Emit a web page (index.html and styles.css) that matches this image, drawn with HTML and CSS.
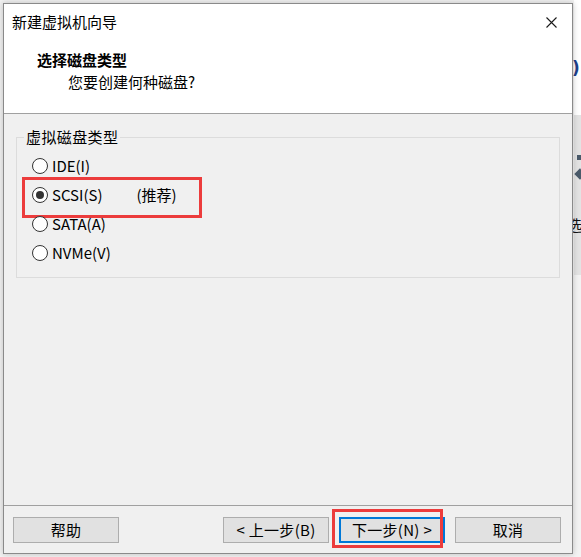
FILE: index.html
```html
<!DOCTYPE html>
<html lang="zh-CN">
<head>
<meta charset="utf-8">
<title>新建虚拟机向导</title>
<link rel="stylesheet" href="styles.css">
</head>
<body>
<div class="desktop">
  <div class="backapp">
    <div class="backapp-top"><span class="paren">)</span></div>
    <div class="backapp-band">
      <span class="mark-square"></span>
      <span class="mark-diamond"></span>
      <span class="back-text">选</span>
    </div>
  </div>

  <div class="window">
    <div class="titlebar">
      <span class="title">新建虚拟机向导</span>
      <svg class="close" width="11" height="11" viewBox="0 0 11 11"><path d="M0.5 0.5 L10.5 10.5 M10.5 0.5 L0.5 10.5" stroke="#1a1a1a" stroke-width="1.1" fill="none"/></svg>
    </div>
    <div class="header">
      <div class="heading">选择磁盘类型</div>
      <div class="subheading">您要创建何种磁盘?</div>
    </div>
    <div class="body">
      <fieldset class="group">
        <legend class="legend">虚拟磁盘类型</legend>
        <div class="row"><span class="radio"></span><span class="label">IDE(I)</span></div>
        <div class="row row-marked"><span class="radio checked"></span><span class="label">SCSI(S)</span><span class="label rec">(推荐)</span><span class="redbox redbox-row"></span></div>
        <div class="row"><span class="radio"></span><span class="label">SATA(A)</span></div>
        <div class="row"><span class="radio"></span><span class="label">NVMe(V)</span></div>
      </fieldset>
    </div>
    <div class="footer">
      <div class="btn">帮助</div>
      <div class="btn btn-prev">&lt; 上一步(B)</div>
      <div class="btn btn-default">下一步(N) &gt;<span class="redbox redbox-btn"></span></div>
      <div class="btn">取消</div>
    </div>
  </div>
</div>
</body>
</html>
```
FILE: styles.css
```css
html, body {
  margin: 0;
  padding: 0;
}
body {
  width: 581px;
  height: 557px;
  overflow: hidden;
  background: #f2f2f2;
  font-family: "Noto Sans CJK SC", "Microsoft YaHei", sans-serif;
  font-size: 15px;
  color: #000;
}
.desktop {
  position: relative;
  width: 581px;
  height: 557px;
}

/* background application peeking on the right */
.backapp {
  position: absolute;
  left: 574px;
  top: 0;
  width: 7px;
  height: 557px;
  display: flex;
  flex-direction: column;
  background: #f3f3f3;
}
.backapp-top {
  height: 115px;
  background: #ffffff;
  position: relative;
}
.paren {
  position: absolute;
  left: -2px;
  top: 58px;
  font-family: "DejaVu Sans", sans-serif;
  font-weight: bold;
  font-size: 17px;
  color: #1d3f8a;
}
.backapp-band {
  height: 160px;
  background: #e3e3e3;
  position: relative;
}
.mark-square {
  position: absolute;
  left: 3px;
  top: 40px;
  width: 5px;
  height: 5px;
  background: #4a5a6a;
}
.mark-diamond {
  position: absolute;
  left: 2px;
  top: 55px;
  width: 8px;
  height: 8px;
  background: #4a5a6a;
  transform: rotate(45deg);
}
.back-text {
  position: absolute;
  left: -7px;
  top: 99px;
  font-size: 15px;
  color: #111;
}

/* dialog window */
.window {
  position: absolute;
  left: 3px;
  top: 3px;
  width: 568px;
  height: 549px;
  border: 1px solid #8a8a8a;
  background: #f0f0f0;
  box-shadow: 0 0 6px rgba(0, 0, 0, 0.22);
  display: flex;
  flex-direction: column;
}
.titlebar {
  height: 36px;
  background: #ffffff;
  display: flex;
  align-items: center;
  justify-content: space-between;
  padding: 0 15px 0 8px;
}
.title {
  font-size: 15px;
  line-height: 20px;
}
.close {
  display: block;
}
.header {
  background: #ffffff;
  border-bottom: 1px solid #a0a0a0;
  padding-top: 10px;
  box-sizing: border-box;
  height: 74px;
}
.heading {
  font-weight: bold;
  line-height: 20px;
  padding-left: 33px;
}
.subheading {
  line-height: 20px;
  padding-left: 64px;
  margin-top: 2px;
}
.body {
  height: 391px;
  border-bottom: 1px solid #a0a0a0;
  background: #f0f0f0;
}
.group {
  margin: 13px 12px 0 12px;
  padding: 4px 7px 10px 7px;
  border: 1px solid #dcdcdc;
  min-width: 0;
}
.legend {
  padding: 0 2px;
  line-height: 20px;
  letter-spacing: 0.4px;
}
.row {
  position: relative;
  height: 29px;
  display: flex;
  align-items: center;
  padding-left: 8px;
}
.radio {
  width: 14px;
  height: 14px;
  border: 1px solid #333333;
  border-radius: 50%;
  background: #ffffff;
  position: relative;
  flex: none;
}
.radio.checked::after {
  content: "";
  position: absolute;
  left: 3px;
  top: 3px;
  width: 8px;
  height: 8px;
  border-radius: 50%;
  background: #333333;
}
.label {
  margin-left: 4px;
  line-height: 20px;
}
.rec {
  margin-left: 34px;
}
.redbox {
  position: absolute;
  border: 3px solid #ec3c3c;
  box-sizing: border-box;
  pointer-events: none;
}
.redbox-row {
  left: -2px;
  top: -3px;
  width: 180px;
  height: 41px;
}

.footer {
  flex: 1;
  display: flex;
  align-items: flex-start;
  padding: 11px 11px 0 9px;
  gap: 10px;
}
.btn {
  position: relative;
  width: 106px;
  height: 26px;
  box-sizing: border-box;
  border: 1px solid #adadad;
  background: #e1e1e1;
  display: flex;
  align-items: center;
  justify-content: center;
  line-height: 20px;
  letter-spacing: 0.3px;
}
.btn-prev {
  margin-left: auto;
}
.btn-default {
  border: 2px solid #0078d7;
}
.redbox-btn {
  left: -9px;
  top: -10px;
  width: 111px;
  height: 39px;
}
```
